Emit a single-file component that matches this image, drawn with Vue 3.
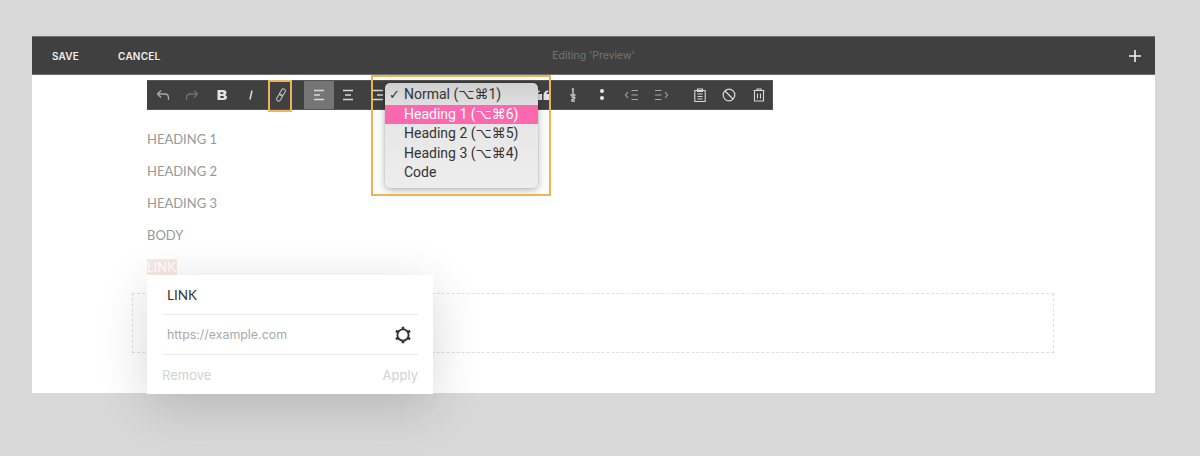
<template>
  <div class="page">
    <div class="window">
      <header class="topbar">
        <div class="actions">
          <span class="action save">SAVE</span>
          <span class="action">CANCEL</span>
        </div>
        <span class="title">Editing 'Preview'</span>
        <svg class="plus" width="14" height="14" viewBox="0 0 14 14"><path d="M7 1v12M1 7h12" stroke="#f2f2f2" stroke-width="1.6" fill="none" /></svg>
      </header>

      <div class="toolbar">
        <div class="group">
          <button class="tool dim">
            <svg width="14" height="14" viewBox="0 0 14 14"><path d="M5 2.500 1.500 6 5 9.500M1.500 6H9c2.200 0 3.500 1.500 3.500 4v2" /></svg>
          </button>
          <button class="tool dimmer">
            <svg width="14" height="14" viewBox="0 0 14 14"><path d="M9 2.500 12.500 6 9 9.500M12.500 6H5c-2.200 0-3.500 1.500-3.500 4v2" /></svg>
          </button>
          <button class="tool">
            <svg width="14" height="14" viewBox="0 0 14 14"><path class="solid" fill-rule="evenodd" d="M2.500 2h5.800c2 0 3.200 1 3.200 2.700 0 1-.5 1.800-1.300 2.200 1.100.4 1.800 1.300 1.800 2.400 0 1.800-1.300 2.700-3.400 2.700H2.500zM5.400 4.200v1.800h2.100c.6 0 1-.4 1-.9s-.4-.9-1-.9zM5.400 8v2h2.400c.7 0 1.100-.4 1.100-1s-.4-1-1.100-1z" /></svg>
          </button>
          <button class="tool">
            <svg width="14" height="14" viewBox="0 0 14 14"><path d="M8 2.500 6 11.500" stroke-width="1.500" /></svg>
          </button>
          <button class="tool">
            <svg width="14" height="14" viewBox="0 0 14 14"><g transform="rotate(30 7 7)" stroke="#c8c8c8"><rect x="5" y="0.300" width="4" height="7.400" rx="2" stroke-width="1" /><rect x="5" y="6.300" width="4" height="7.400" rx="2" stroke-width="1" /></g></svg>
          </button>
        </div>

        <div class="group aligns">
          <button class="tool active">
            <svg width="14" height="14" viewBox="0 0 14 14"><path d="M2 2.500h10M2 7h6M2 11.500h10" /></svg>
          </button>
          <button class="tool">
            <svg width="14" height="14" viewBox="0 0 14 14"><path d="M2 2.500h10M4 7h6M2 11.500h10" /></svg>
          </button>
          <button class="tool">
            <svg width="14" height="14" viewBox="0 0 14 14"><path d="M2 2.500h10M6 7h6M2 11.500h10" /></svg>
          </button>
        </div>

        <div class="group">
          <button v-for="n in 4" :key="n" class="tool"></button>
        </div>

        <div class="group">
          <button class="tool">
            <svg width="16" height="14" viewBox="0 0 16 14"><path class="solid" d="M0 7C.3 4.200 2.200 2.700 4.500 2.300L5 3.800C3.700 4.300 3 5 2.900 6H7v6H0zM8.500 7C8.800 4.200 10.700 2.700 13 2.300l.5 1.500C12.200 4.300 11.500 5 11.400 6H15.500v6h-7z" /></svg>
          </button>
          <button class="tool">
            <svg width="14" height="16" viewBox="0 0 14 16"><path d="M5.800 2.500 7 1.800V7M4.500 8h5M5.500 10h2.500q.8 0 .8.900 0 .8-.8.900l-2 .9v1.500h3" stroke-width="1.300" /></svg>
          </button>
          <button class="tool">
            <svg width="14" height="14" viewBox="0 0 14 14"><circle class="solid" cx="7" cy="3" r="2.100" /><circle class="solid" cx="7" cy="10" r="2.100" /></svg>
          </button>
          <button class="tool dim">
            <svg width="16" height="14" viewBox="0 0 16 14"><path d="M4 4 1.500 7 4 10M7.500 2.500H14M7.500 7H14M7.500 11.500H14" stroke-width="1.100" /></svg>
          </button>
          <button class="tool dim">
            <svg width="16" height="14" viewBox="0 0 16 14"><path d="M12 4l2.500 3L12 10M2 2.500h6.500M2 7h6.500M2 11.500h6.500" stroke-width="1.100" /></svg>
          </button>
        </div>

        <div class="group">
          <button class="tool">
            <svg width="14" height="14" viewBox="0 0 14 14"><path d="M1.800 2.500h10.400v11H1.800zM4.500 1h5v2.500h-5zM4.500 6h5M4.500 8.500h5M4.500 11h5" stroke-width="1.100" /></svg>
          </button>
          <button class="tool">
            <svg width="14" height="14" viewBox="0 0 14 14"><circle cx="7" cy="7" r="5.800" stroke-width="1.200" /><path d="M3 3l8 8" stroke-width="1.200" /></svg>
          </button>
          <button class="tool">
            <svg width="14" height="14" viewBox="0 0 14 14"><path d="M1.500 2.500h11M5 2.500V1h4v1.500M2.500 2.500V13h9V2.500M5.500 5.500v5M8.500 5.500v5" stroke-width="1.100" /></svg>
          </button>
        </div>
      </div>

      <div class="content">
        <p class="line">HEADING 1</p>
        <p class="line">HEADING 2</p>
        <p class="line">HEADING 3</p>
        <p class="line">BODY</p>
        <p class="line"><span class="selected">LINK</span></p>
        <div class="dropzone"></div>
      </div>

      <ul class="menu">
        <li v-for="item in menuItems" :key="item.label" class="menu-item" :class="{ hot: item.hot }">
          <span class="check">{{ item.checked ? '✓' : '' }}</span>{{ item.label }}
        </li>
      </ul>

      <div class="mark mark-link"></div>
      <div class="mark mark-menu"></div>

      <div class="popover">
        <div class="pop-row name">LINK</div>
        <div class="pop-row url">
          <span>https://example.com</span>
          <svg width="18" height="18" viewBox="0 0 18 18" class="gear">
            <circle cx="9" cy="9" r="5.600" fill="none" stroke="#333" stroke-width="1.900" />
            <path d="M9 .8v2.600M9 14.600v2.600M1.900 4.900l2.200 1.300M13.900 11.800l2.200 1.300M1.900 13.100l2.200-1.300M13.900 6.200l2.200-1.300" stroke="#333" stroke-width="2.600" fill="none" />
          </svg>
        </div>
        <div class="pop-foot">
          <span>Remove</span>
          <span>Apply</span>
        </div>
      </div>
    </div>
  </div>
</template>

<script setup>
const menuItems = [
  { label: 'Normal (⌥⌘1)', checked: true },
  { label: 'Heading 1 (⌥⌘6)', hot: true },
  { label: 'Heading 2 (⌥⌘5)' },
  { label: 'Heading 3 (⌥⌘4)' },
  { label: 'Code' }
]
</script>

<style scoped>
.page {
  height: 456px;
  box-sizing: border-box;
  padding: 36px 0 0 32px;
  background: #d8d8d8;
}

.window {
  position: relative;
  width: 1123px;
  height: 357px;
  background: #fff;
  font-family: Inter, "Liberation Sans", sans-serif;
}

.topbar {
  display: flex;
  align-items: center;
  justify-content: space-between;
  height: 39px;
  box-sizing: border-box;
  padding: 0 13px 0 20px;
  background: #404040;
  border-top: 1px solid #6e6e6e;
  border-bottom: 1px solid #6e6e6e;
}

.actions {
  display: flex;
  gap: 39px;
  width: 300px;
}

.action {
  color: #f0f0f0;
  font-size: 10px;
  font-weight: 600;
  letter-spacing: 0.2px;
}

.title {
  color: #747474;
  font-size: 10.5px;
  margin-right: 3px;
}

.plus {
  margin-left: 290px;
}

.toolbar {
  display: flex;
  gap: 9px;
  width: 626px;
  height: 30px;
  box-sizing: border-box;
  margin: 5px 0 0 115px;
  padding-left: 1px;
  background: #404040;
  border: 1px solid #555;
  border-left: 0;
}

.group {
  display: flex;
}

.aligns {
  margin-left: -0.5px;
}

.tool {
  display: flex;
  align-items: center;
  justify-content: center;
  width: 29.5px;
  padding: 0;
  background: none;
  border: 0;
}

.tool svg {
  fill: none;
  stroke: #d8d8d8;
  stroke-width: 1.3;
}

.tool svg .solid {
  fill: #e4e4e4;
  stroke: none;
}

.tool.dim svg {
  stroke: #a8a8a8;
}

.tool.dimmer svg {
  stroke: #707070;
}

.tool.active {
  background: #757575;
}

.content {
  padding: 19px 0 0 115px;
}

.line {
  margin: 0 0 12px;
  height: 20px;
  line-height: 20px;
  font-family: Lato, sans-serif;
  font-size: 13px;
  color: #999;
}

.selected {
  display: inline-block;
  height: 16px;
  line-height: 16px;
  padding-right: 1px;
  color: #fff;
  background: #f5e9e2;
}

.dropzone {
  width: 922px;
  height: 60px;
  box-sizing: border-box;
  margin: 16px 0 0 -15px;
  border: 1px dashed #dfdfdf;
}

.menu {
  position: absolute;
  left: 353px;
  top: 47px;
  width: 153px;
  height: 105px;
  box-sizing: border-box;
  margin: 0;
  padding: 2px 0 0;
  list-style: none;
  border-radius: 5px;
  background: linear-gradient(#cfcfcf, #e6e6e6 30%, #ededed);
  box-shadow: 0 2px 8px rgba(0, 0, 0, 0.3), 0 0 1px rgba(0, 0, 0, 0.4);
  font-family: Roboto, "DejaVu Sans", sans-serif;
  font-size: 14px;
  color: #333;
}

.menu-item {
  display: flex;
  height: 19.5px;
  line-height: 19.5px;
  white-space: pre;
}

.menu-item.hot {
  background: #fb68ae;
  color: #fff;
}

.check {
  width: 19px;
  padding-left: 4px;
  box-sizing: border-box;
  font-size: 13px;
}

.mark {
  position: absolute;
  box-sizing: border-box;
  border: 2px solid #eeb259;
  pointer-events: none;
}

.mark-link {
  left: 236px;
  top: 44px;
  width: 24px;
  height: 32px;
}

.mark-menu {
  left: 339px;
  top: 39px;
  width: 180px;
  height: 121px;
}

.popover {
  position: absolute;
  left: 115px;
  top: 239px;
  width: 286px;
  height: 119px;
  box-sizing: border-box;
  padding: 0 15px;
  background: #fff;
  box-shadow: 0 12px 50px rgba(0, 0, 0, 0.16);
  font-size: 13px;
}

.pop-row {
  display: flex;
  align-items: center;
  justify-content: space-between;
  height: 40px;
  padding: 0 5px;
  border-bottom: 1px solid #ececec;
  box-sizing: border-box;
}

.name {
  color: #333;
  font-family: Lato, sans-serif;
  font-size: 13.500px;
}

.url {
  color: #aaa;
  font-size: 12.400px;
}

.gear {
  margin-right: 1px;
}

.pop-foot {
  display: flex;
  justify-content: space-between;
  height: 39px;
  align-items: center;
  color: #d2d2d2;
}
</style>
